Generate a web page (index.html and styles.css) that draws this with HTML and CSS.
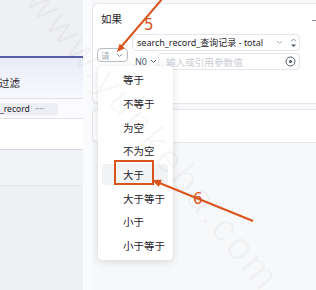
FILE: index.html
```html
<!DOCTYPE html>
<html lang="zh-CN">
<head>
<meta charset="utf-8">
<title>条件设置</title>
<link rel="stylesheet" href="styles.css">
</head>
<body>
<div class="page">
  <aside class="left">
    <div class="l-top"></div>
    <div class="l-head"><span class="l-title">过滤</span></div>
    <div class="l-row1"><span class="pill">_record <span class="dots">····</span></span></div>
    <div class="l-row2"></div>
    <div class="l-row3"></div>
    <div class="l-rest"></div>
  </aside>
  <main class="right">
    <section class="card card-if">
      <div class="if-title">如果</div>
      <span class="collapse"></span>
      <div class="cond">
        <div class="sel-op">
          <span>请</span>
          <svg class="chev" width="7" height="5" viewBox="0 0 7 5"><path d="M1 1l2.5 2.5L6 1" fill="none" stroke="#86909c" stroke-width="1"/></svg>
        </div>
        <div class="fields">
          <div class="f1">
            <span class="txt">search_record_查询记录 - total</span>
            <svg class="chev-f1" width="7" height="5" viewBox="0 0 7 5"><path d="M1 1l2.5 2.5L6 1" fill="none" stroke="#a9aeb8" stroke-width="1"/></svg>
            <svg class="stepper" width="7" height="12" viewBox="0 0 7 12"><path d="M1 4.5L3.5 2 6 4.5" fill="none" stroke="#86909c" stroke-width="1"/><path d="M1 7.5h5L3.5 10z" fill="#4e5969"/></svg>
          </div>
          <div class="f2row">
            <div class="no">
              <span>N0</span>
              <svg width="7" height="5" viewBox="0 0 7 5"><path d="M1 1l2.5 2.5L6 1" fill="none" stroke="#4e5969" stroke-width="1"/></svg>
            </div>
            <div class="f2">
              <span class="ph">输入或引用参数值</span>
              <svg class="ref" width="11" height="11" viewBox="0 0 11 11"><circle cx="5.5" cy="5.5" r="4.5" fill="none" stroke="#4e5969" stroke-width="1"/><circle cx="5.5" cy="5.5" r="1.5" fill="#4e5969"/></svg>
            </div>
          </div>
        </div>
      </div>
    </section>
    <section class="card card2"></section>
  </main>
</div>

<ul class="menu">
  <li>等于</li>
  <li>不等于</li>
  <li>为空</li>
  <li>不为空</li>
  <li class="active">大于</li>
  <li>大于等于</li>
  <li>小于</li>
  <li>小于等于</li>
</ul>

<div class="wm">www.yunkeba.com</div>

<svg class="annot" width="316" height="290" viewBox="0 0 316 290">
  <line x1="163" y1="-2" x2="121" y2="47" stroke="#d9541c" stroke-width="2"/>
  <polygon points="117,52 124.9,48.2 119.6,43.7" fill="#d9541c"/>
  <text x="144" y="30" class="num">5</text>
  <rect x="115" y="161" width="38" height="23" fill="none" stroke="#d9541c" stroke-width="2"/>
  <line x1="253" y1="221" x2="157" y2="182" stroke="#d9541c" stroke-width="2"/>
  <polygon points="152,180 161.8,179.7 158.8,187.1" fill="#d9541c"/>
  <text x="193" y="204" class="num">6</text>
</svg>
</body>
</html>
```

FILE: styles.css
```css
* { box-sizing: border-box; }

body {
  margin: 0;
  width: 316px;
  height: 290px;
  overflow: hidden;
  position: relative;
  font-family: "Noto Sans", "Noto Sans CJK SC", sans-serif;
  background: #f7f8fa;
  color: #1f2329;
}

.page {
  display: flex;
  height: 290px;
}

/* left panel */
.left {
  width: 83px;
  flex: none;
  display: flex;
  flex-direction: column;
  overflow: hidden;
  background: #eef0f3;
}
.l-top {
  height: 58px;
  background: #eff0f3;
  border-bottom: 2px solid #5a5ea5;
}
.l-head {
  height: 41px;
  padding-top: 9px;
  display: flex;
  align-items: center;
  background: linear-gradient(#e9ecf8, #f8f9fd);
  border-bottom: 1px solid #e1e3e8;
  font-size: 10.5px;
}
.l-title { margin-left: -1px; }
.l-row1 {
  height: 20px;
  display: flex;
  align-items: center;
  background: #fbfbfd;
  border-bottom: 1px solid #e1e3e8;
}
.pill {
  margin-left: -3px;
  height: 12px;
  line-height: 12px;
  padding: 0 14px 0 3px;
  border-radius: 3px;
  background: #eceef3;
  font-size: 8.5px;
  color: #1f2329;
  white-space: nowrap;
}
.dots { color: #6b7280; margin-left: 3px; }
.l-row2 {
  height: 31px;
  background: #ffffff;
  border-bottom: 1px solid #d3d6e3;
}
.l-row3 {
  height: 36px;
  background: #f2f3f6;
  border-bottom: 1px solid #e3e5ea;
}
.l-rest { flex: 1; }

/* right panel */
.right {
  flex: 1;
  padding: 3px 0 0 9px;
  background: linear-gradient(90deg, #fafbfc 0, #fafbfc 9px, #f7f8fa 9px);
}
.card {
  background: #ffffff;
  border: 1px solid #e5e6eb;
  border-right: none;
  border-radius: 6px 0 0 6px;
}
.card-if {
  position: relative;
  height: 101px;
  padding: 7px 0 0 8px;
  margin-bottom: 5px;
}
.if-title {
  font-size: 10.5px;
  line-height: 17px;
  margin-bottom: 6px;
}
.collapse {
  position: absolute;
  right: 0;
  top: 16px;
  width: 4px;
  height: 1px;
  background: #86909c;
}
.cond {
  display: flex;
  align-items: flex-start;
  gap: 4px;
  margin-left: -4px;
}
.sel-op {
  width: 31px;
  height: 14px;
  margin-top: 14px;
  border: 1px solid #b8bcc4;
  border-radius: 4px;
  display: flex;
  align-items: center;
  gap: 6px;
  padding-left: 3px;
  font-size: 8.5px;
  color: #a9aeb8;
}
.fields {
  width: 168px;
  display: flex;
  flex-direction: column;
  gap: 2px;
}
.f1 {
  height: 17px;
  border: 1px solid #e5e6eb;
  border-radius: 4px;
  display: flex;
  align-items: center;
  padding: 0 2px 0 4px;
  font-size: 9px;
  white-space: nowrap;
}
.f1 .txt { flex: 1; overflow: hidden; }
.chev-f1 { margin-right: 7px; }
.f2row {
  height: 17px;
  display: flex;
  align-items: center;
}
.no {
  width: 26px;
  flex: none;
  display: flex;
  align-items: center;
  gap: 3px;
  padding-left: 3px;
  font-size: 9px;
  color: #4e5969;
}
.f2 {
  flex: 1;
  height: 17px;
  border: 1px solid #e5e6eb;
  border-radius: 4px;
  display: flex;
  align-items: center;
  padding: 0 3px 0 7px;
  font-size: 9.6px;
  color: #c9cdd4;
  white-space: nowrap;
}
.f2 .ph { flex: 1; }
.card2 { height: 34px; }

/* dropdown */
.menu {
  position: absolute;
  left: 98px;
  top: 66px;
  width: 75px;
  margin: 0;
  padding: 3px 0;
  list-style: none;
  display: flex;
  flex-direction: column;
  gap: 2px;
  background: #ffffff;
  border-radius: 4px;
  box-shadow: 0 2px 8px rgba(0, 0, 0, 0.12), 0 0 1px rgba(0, 0, 0, 0.12);
}
.menu li {
  height: 21.7px;
  margin: 0 5px 0 4px;
  padding-left: 21px;
  display: flex;
  align-items: center;
  border-radius: 3px;
  font-size: 10.5px;
  color: #1f2329;
}
.menu li.active { background: #f2f3f5; }

/* watermark */
.wm {
  position: absolute;
  left: 52px;
  top: -22px;
  transform: rotate(51deg);
  transform-origin: left top;
  font-family: "Liberation Sans", sans-serif;
  font-size: 40px;
  letter-spacing: 3px;
  color: rgba(0, 0, 0, 0.03);
  white-space: nowrap;
  pointer-events: none;
}

/* annotations */
.annot {
  position: absolute;
  left: 0;
  top: 0;
  pointer-events: none;
}
.num {
  font-family: "DejaVu Sans", sans-serif;
  font-size: 15px;
  fill: #d9541c;
}
```
